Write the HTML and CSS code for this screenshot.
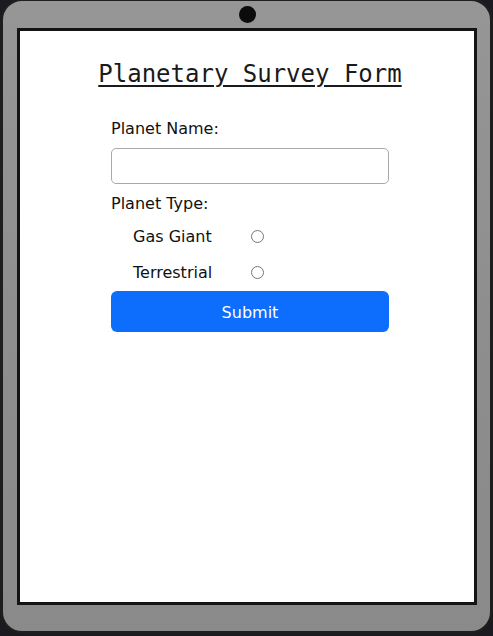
FILE: index.html
```html
<!DOCTYPE html>
<html lang="en">
<head>
<meta charset="utf-8">
<title>Planetary Survey Form</title>
<link rel="stylesheet" href="styles.css">
</head>
<body>
<div class="tablet">
  <div class="camera-bar"><span class="camera"></span></div>
  <div class="screen">
    <h1 class="title">Planetary Survey Form</h1>
    <form class="survey">
      <label class="field-label" for="planet-name">Planet Name:</label>
      <input class="text-input" type="text" id="planet-name">
      <span class="field-label">Planet Type:</span>
      <div class="radio-row">
        <label for="gas">Gas Giant</label>
        <input type="radio" id="gas" name="type" class="radio">
      </div>
      <div class="radio-row">
        <label for="terr">Terrestrial</label>
        <input type="radio" id="terr" name="type" class="radio">
      </div>
      <button type="button" class="submit">Submit</button>
    </form>
  </div>
</div>
</body>
</html>
```

FILE: styles.css
```css
html, body {
  margin: 0;
  padding: 0;
}
body {
  background: #1b1a20;
  width: 493px;
  height: 636px;
  overflow: hidden;
}
.tablet {
  box-sizing: border-box;
  width: 493px;
  height: 636px;
  margin-top: -2px;
  border: 3px solid #1e1e1e;
  border-radius: 22px;
  background: linear-gradient(180deg, #969696 0%, #8e8e8e 50%, #8a8a8a 100%);
  padding: 0 13px 26px 14px;
  display: flex;
  flex-direction: column;
}
.camera-bar {
  height: 27px;
  display: flex;
  justify-content: center;
}
.camera {
  width: 17px;
  height: 17px;
  margin-top: 5px;
  border-radius: 50%;
  background: #0c0c0c;
}
.screen {
  flex: 1;
  background: #ffffff;
  border: 3px solid #141414;
  padding-left: 6px;
  display: flex;
  flex-direction: column;
  align-items: center;
}
.title {
  margin: 29px 0 0 0;
  font-family: "DejaVu Sans Mono", monospace;
  font-size: 24px;
  font-weight: normal;
  line-height: 28px;
  color: #1a1a1a;
  text-decoration: underline;
  text-underline-offset: 3px;
}
.survey {
  margin-top: 29px;
  width: 278px;
  display: flex;
  flex-direction: column;
  font-family: "Comic Sans MS", "DejaVu Sans", sans-serif;
  font-size: 16px;
  color: #111111;
}
.field-label {
  line-height: 24px;
}
.text-input {
  box-sizing: border-box;
  height: 36px;
  width: 100%;
  margin: 7px 0 8px;
  border: 1px solid #a9a9a9;
  border-radius: 5px;
  background: #fff;
}
.radio-row {
  height: 36px;
  display: grid;
  grid-template-columns: 118px 13px;
  align-items: center;
  padding-left: 22px;
}
.radio-row:first-of-type {
  margin-top: 2px;
}
.radio {
  margin: 0;
  width: 13px;
  height: 13px;
}
.submit {
  margin-top: 1px;
  height: 41px;
  width: 100%;
  border: none;
  border-radius: 6px;
  background: #0d6efd;
  color: #ffffff;
  font-family: "Comic Sans MS", "DejaVu Sans", sans-serif;
  font-size: 16px;
  padding-top: 2px;
}
```
